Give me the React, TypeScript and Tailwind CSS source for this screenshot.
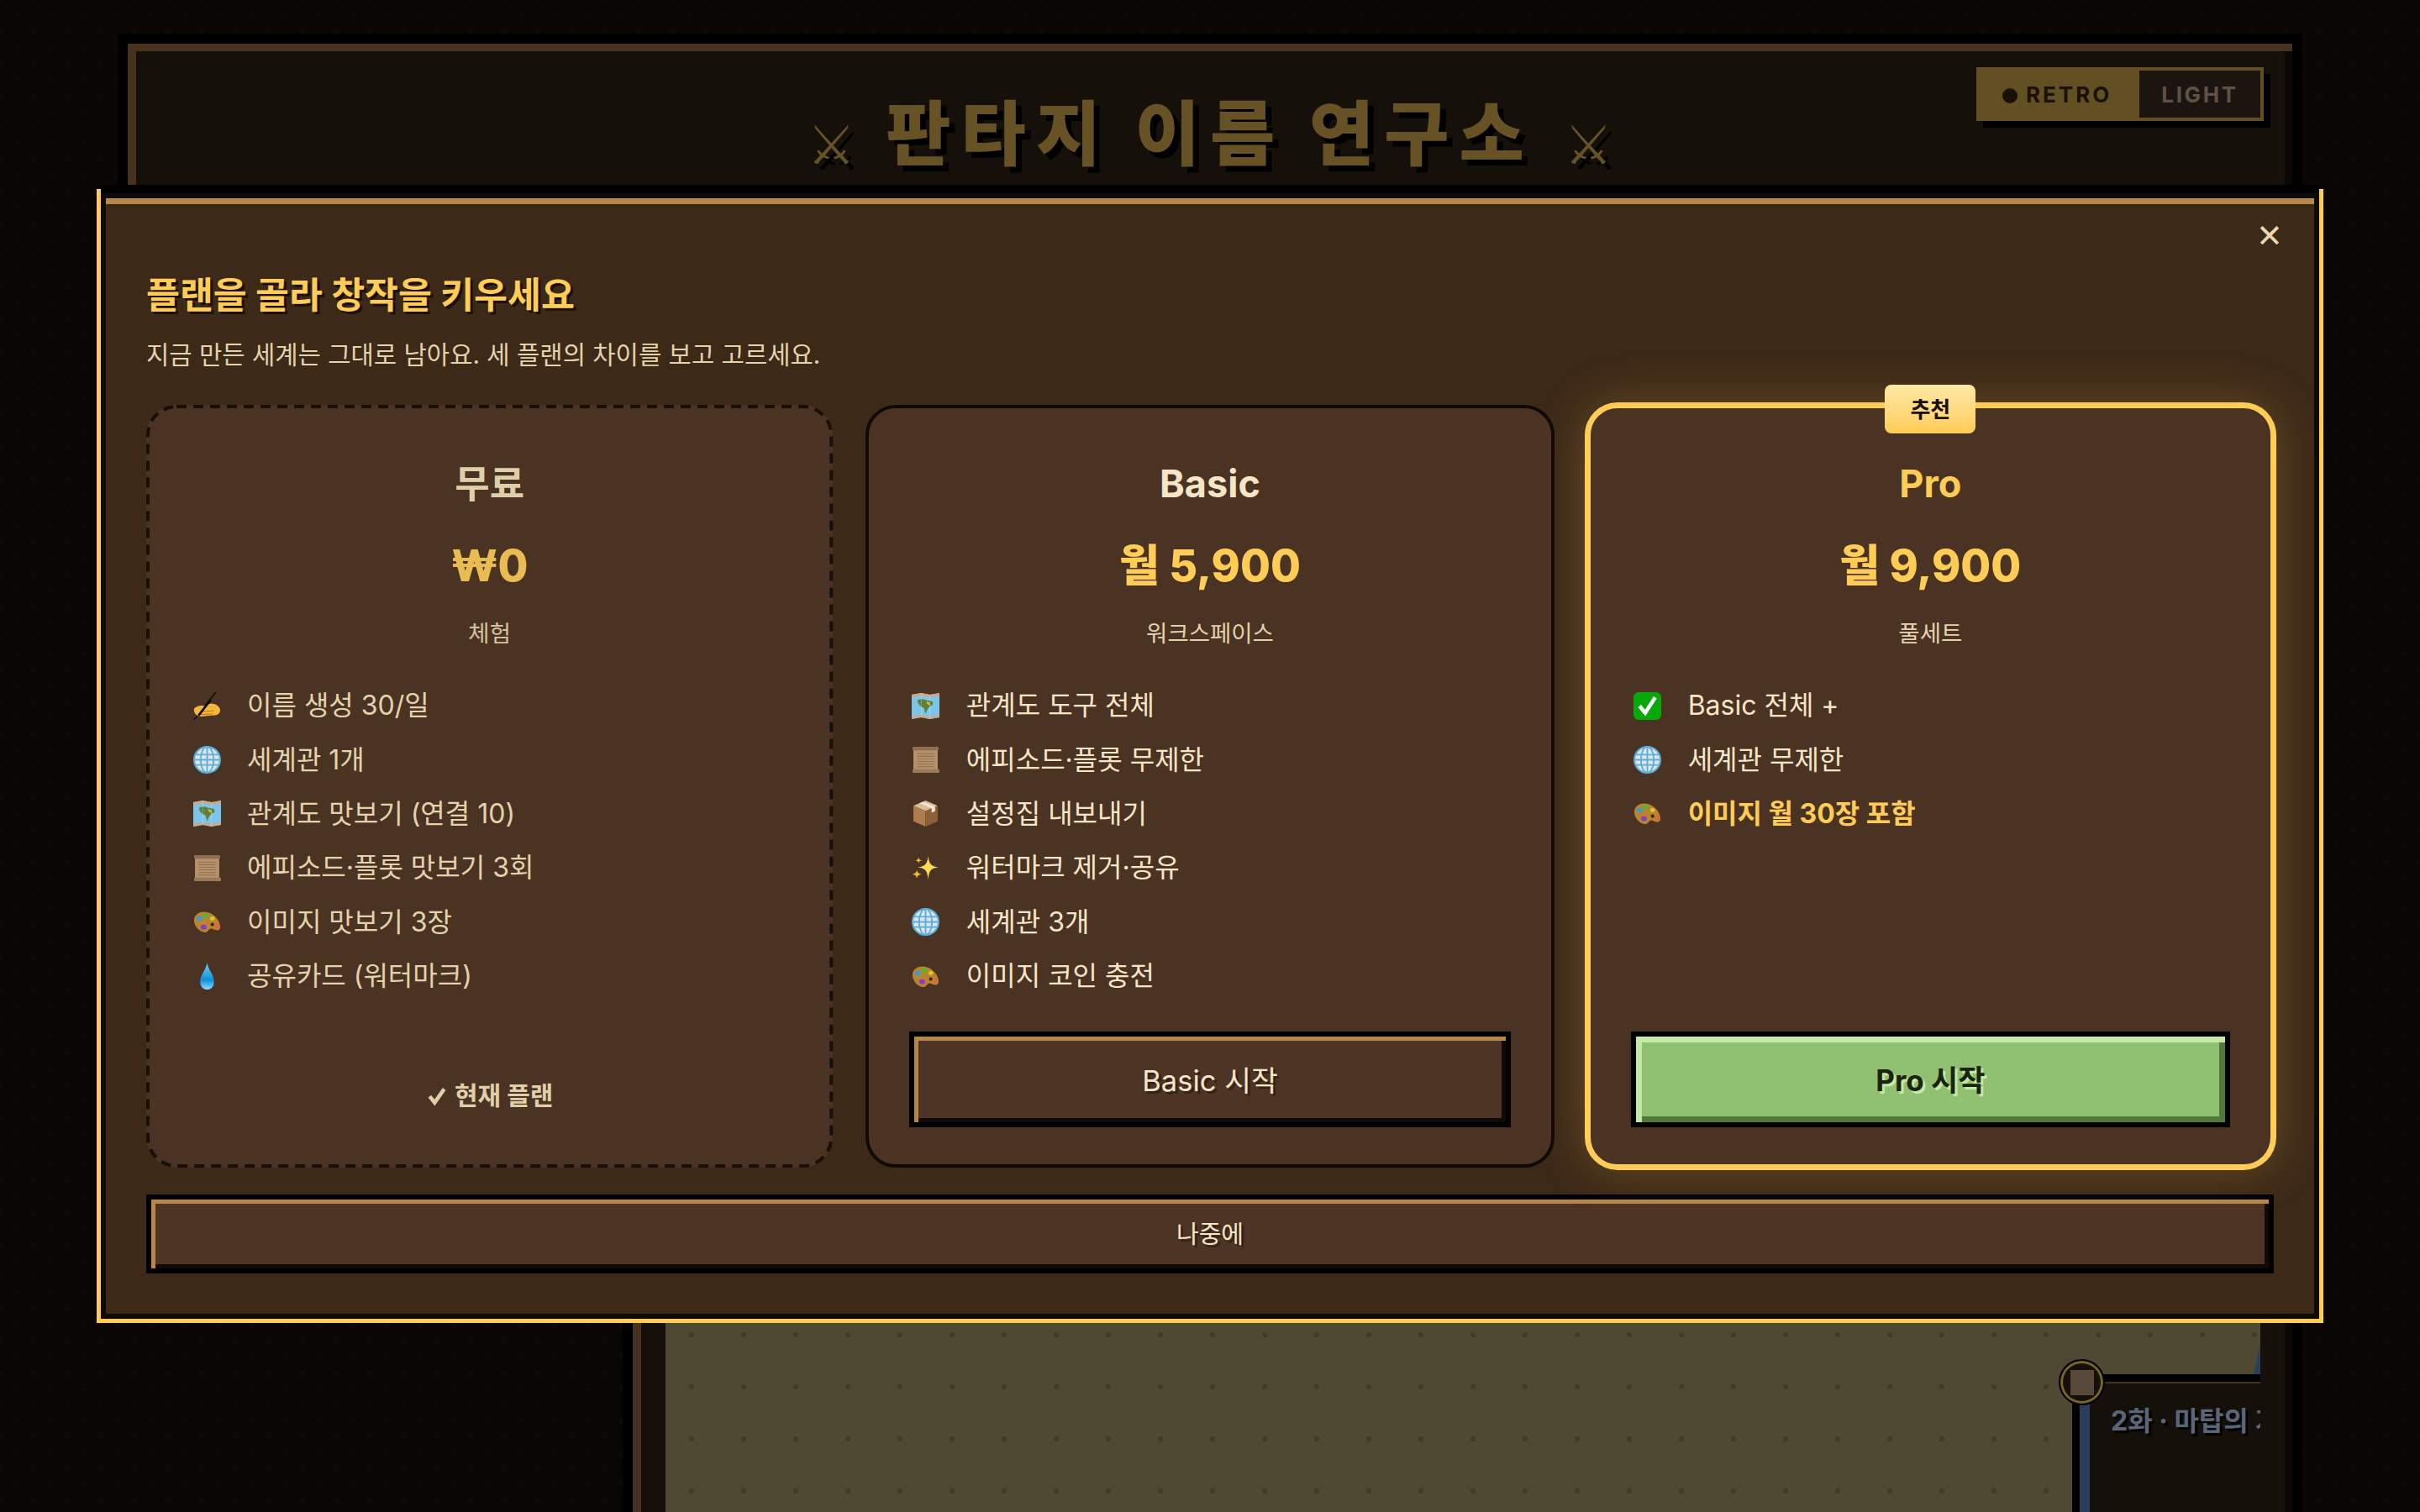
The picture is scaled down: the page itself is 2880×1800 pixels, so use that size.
import React from "react";

// emoji drawn by hand, the sandbox has no colour emoji font
const HandIcon = () => (
  <svg viewBox="0 0 32 32" className="h-[33px] w-[33px]">
    <path d="M1 32 L26 0" stroke="#0a0a0a" strokeWidth="1.4" fill="none" />
    <path d="M1 19 C4 16 9 15 12 16 L20 13 C26 13 31 17 31 21 C31 25 27 27 21 27 L9 28 C4 28 0 24 1 19 Z" fill="#f6b73c" />
    <path d="M8 23 C13 21 18 23 24 21 M7 26 C12 25 17 26 23 25" stroke="#b9761c" strokeWidth="1" fill="none" />
    <path d="M6 27 L20 9" stroke="#0a0a0a" strokeWidth="2.6" />
  </svg>
);

const GlobeIcon = () => (
  <svg viewBox="0 0 32 32" className="h-[33px] w-[33px]">
    <circle cx="16" cy="16" r="15" fill="#dfe5e8" stroke="#5aaedc" strokeWidth="2" />
    <ellipse cx="16" cy="16" rx="7.5" ry="15" fill="none" stroke="#5aaedc" strokeWidth="1.8" />
    <path d="M16 1 V31 M2 10 H30 M1 16 H31 M2 22 H30" stroke="#5aaedc" strokeWidth="1.8" />
  </svg>
);

const MapIcon = () => (
  <svg viewBox="0 0 32 32" className="h-[33px] w-[33px]">
    <path d="M0 3 L11 1 L21 3 L32 1 V29 L21 31 L11 29 L0 31 Z" fill="#7cc4ea" />
    <path d="M0 3 L11 1 L21 3 L32 1 V4 L21 6 L11 4 L0 6 Z M0 28 L11 26 L21 28 L32 26 V29 L21 31 L11 29 L0 31 Z" fill="#c9a98a" />
    <path d="M7 9 C11 7 15 8 18 10 C23 9 26 12 24 15 C21 15 20 18 18 20 L16 25 L14 18 C10 17 6 13 7 9 Z" fill="#5f7f3a" />
    <path d="M17 11 C20 11 22 13 21 15 C19 15 17 14 17 11 Z" fill="#d8b23a" />
    <path d="M11 1 V29 M21 3 V31" stroke="#ffffff" strokeOpacity="0.25" />
  </svg>
);

const ScrollIcon = () => (
  <svg viewBox="0 0 32 32" className="h-[33px] w-[33px]">
    <rect x="2" y="3" width="28" height="26" fill="#b5926c" />
    <path d="M6 9 H26 M6 12 H26 M6 15 H26 M6 18 H26 M6 21 H26 M6 24 H26" stroke="#93724f" strokeWidth="1" />
    <rect x="1" y="1" width="30" height="4" rx="1" fill="#8f6f4e" />
    <rect x="1" y="27" width="31" height="4" rx="1" fill="#9a7a58" />
  </svg>
);

const PaletteIcon = () => (
  <svg viewBox="0 0 32 32" className="h-[33px] w-[33px]">
    <path d="M1 13 C2 6 10 3 17 5 C25 7 32 16 31 23 C30 27 26 26 22 24 C18 23 18 27 15 28 C8 29 0 21 1 13 Z" fill="#b8842f" />
    <ellipse cx="7" cy="12" rx="3" ry="2.6" fill="#2d9fe0" />
    <ellipse cx="14" cy="9" rx="3" ry="2.4" fill="#3fc02a" />
    <ellipse cx="22" cy="12" rx="2.6" ry="2.2" fill="#e2c72a" />
    <ellipse cx="12" cy="22" rx="3.4" ry="2.8" fill="#8a3ec8" />
    <ellipse cx="28" cy="21" rx="2.4" ry="2.6" fill="#e8604a" />
    <circle cx="22" cy="19" r="2" fill="#3a2412" />
  </svg>
);

const DropIcon = () => (
  <svg viewBox="0 0 32 32" className="h-[33px] w-[33px]">
    <defs>
      <linearGradient id="dropFill" x1="0" y1="0" x2="0" y2="1">
        <stop offset="0" stopColor="#6fd0f8" />
        <stop offset="0.65" stopColor="#0f8fe2" />
        <stop offset="1" stopColor="#8fdcff" />
      </linearGradient>
    </defs>
    <path d="M16 0 C17 8 24 14 24 22 C24 28 20 31 16 31 C12 31 8 28 8 22 C8 14 15 8 16 0 Z" fill="url(#dropFill)" />
  </svg>
);

const BoxIcon = () => (
  <svg viewBox="0 0 32 32" className="h-[33px] w-[33px]">
    <path d="M16 1 L30 7 L16 13 L2 7 Z" fill="#dcbb93" />
    <path d="M2 7 L16 13 V31 L2 25 Z" fill="#b07c4e" />
    <path d="M30 7 L16 13 V31 L30 25 Z" fill="#8f6038" />
    <path d="M9 4 L23 10 V15 L27 13 V8 L13 2.5 Z" fill="#ece6da" />
  </svg>
);

const SparkleIcon = () => (
  <svg viewBox="0 0 32 32" className="h-[33px] w-[33px]">
    <path d="M19 2 C20 11 22 14 31 15 C22 16 20 19 19 29 C18 19 16 16 7 15 C16 14 18 11 19 2 Z" fill="#ffdc55" />
    <path d="M6 18 C6.5 21 7.5 22 11 23 C7.5 24 6.5 25 6 28 C5.5 25 4.5 24 1 23 C4.5 22 5.5 21 6 18 Z" fill="#f5b92c" />
    <path d="M8 3 C8.4 6 9 6.6 12 7 C9 7.4 8.4 8 8 11 C7.6 8 7 7.4 4 7 C7 6.6 7.6 6 8 3 Z" fill="#f5b92c" />
  </svg>
);

const CheckIcon = () => (
  <svg viewBox="0 0 32 32" className="h-[33px] w-[33px]">
    <rect x="0" y="0" width="32" height="32" rx="6" fill="#07a807" />
    <path d="M7 16 L13.5 24 L25 6" stroke="#ffffff" strokeWidth="4.4" fill="none" />
  </svg>
);

const freeRows = [
  { icon: <HandIcon />, label: "이름 생성 30/일" },
  { icon: <GlobeIcon />, label: "세계관 1개" },
  { icon: <MapIcon />, label: "관계도 맛보기 (연결 10)" },
  { icon: <ScrollIcon />, label: "에피소드·플롯 맛보기 3회" },
  { icon: <PaletteIcon />, label: "이미지 맛보기 3장" },
  { icon: <DropIcon />, label: "공유카드 (워터마크)" },
];

const basicRows = [
  { icon: <MapIcon />, label: "관계도 도구 전체" },
  { icon: <ScrollIcon />, label: "에피소드·플롯 무제한" },
  { icon: <BoxIcon />, label: "설정집 내보내기" },
  { icon: <SparkleIcon />, label: "워터마크 제거·공유" },
  { icon: <GlobeIcon />, label: "세계관 3개" },
  { icon: <PaletteIcon />, label: "이미지 코인 충전" },
];

const proRows = [
  { icon: <CheckIcon />, label: "Basic 전체 +" },
  { icon: <GlobeIcon />, label: "세계관 무제한" },
  { icon: <PaletteIcon />, label: "이미지 월 30장 포함", strong: true },
];

type Row = { icon: React.ReactNode; label: string; strong?: boolean };

const FeatureList = ({ rows, dim }: { rows: Row[]; dim?: boolean }) => (
  <ul className="mt-[34px] flex flex-col">
    {rows.map((row) => (
      <li key={row.label} className="flex h-[64.4px] items-center gap-[28px] text-[32px]">
        <span className="flex w-[40px] justify-center">{row.icon}</span>
        <span className={row.strong ? "font-bold text-[#ffcc55]" : dim ? "text-[#e3d3ad]" : "text-[#f5e6c8]"}>{row.label}</span>
      </li>
    ))}
  </ul>
);

const App: React.FC = () => {
  return (
    <div className="relative h-[1800px] w-[2880px] overflow-hidden bg-[#090604] bg-[radial-gradient(circle,#0c0906_3px,transparent_3.5px),radial-gradient(circle,#0c0906_3px,transparent_3.5px)] bg-[length:40px_38px] bg-[position:0_0,20px_19px] font-['Inter','Noto_Sans_CJK_KR',sans-serif]">
      {/* page behind the dialog, dimmed colours taken straight from the picture */}
      <header className="mx-[140px] mt-[40px] grid h-[240px] grid-cols-[1fr_auto_1fr] border-[12px] border-black bg-[#16100a] shadow-[inset_10px_9px_0_#47321f,inset_-9px_0_0_#0a0705]">
        <div />
        <div className="mt-[58px] flex h-[100px] items-center gap-[36px] text-[#665224]">
          <span className="mt-[26px] font-['DejaVu_Sans',sans-serif] text-[64px] leading-none [text-shadow:7px_7px_0_#000]">⚔</span>
          <h1 className="text-[84px] leading-none font-black tracking-[12px] [text-shadow:7px_7px_0_#000]">판타지 이름 연구소</h1>
          <span className="mt-[26px] font-['DejaVu_Sans',sans-serif] text-[64px] leading-none [text-shadow:7px_7px_0_#000]">⚔</span>
        </div>
        <div className="mt-[28px] mr-[34px] flex justify-end">
          <div className="flex h-[64px] w-[342px] border-[4px] border-[#635022] bg-[#635022] shadow-[8px_8px_0_#000]">
            <div className="flex w-[190px] items-center gap-[10px] pl-[27px] text-[26px] font-bold tracking-[3px] text-[#1a1006]">
              <span className="mt-[4px] h-[18px] w-[18px] rounded-full bg-[#1a1006]" />
              RETRO
            </div>
            <div className="flex flex-1 items-center justify-center bg-[#1c140e] text-[26px] font-bold tracking-[2.6px] text-[#5c5344]">LIGHT</div>
          </div>
        </div>
      </header>

      <main className="mt-[20px] mr-[140px] ml-[741px] flex h-[1560px] border-[12px] border-black bg-[#16100a] pt-[6px] pl-[39px] shadow-[inset_10px_0_0_#47321f,inset_-9px_0_0_#0a0705]">
        <div className="relative mr-[38px] flex-1 overflow-hidden bg-[#4f4933] bg-[radial-gradient(circle,#423c2a_3px,transparent_3.5px)] bg-[length:62px_62px]">
          <svg className="absolute top-[1282px] right-0 h-[36px] w-[8px]" viewBox="0 0 8 36">
            <polygon points="8,0 8,36 0,36" fill="#2a3f5a" />
          </svg>
          <div className="absolute top-[1318px] left-[1674px] h-[300px] w-[400px] border-t-[9px] border-l-[9px] border-black bg-[#16100a]">
            <div className="h-[2px] bg-[#47321f]" />
            <div className="absolute top-0 bottom-0 left-0 w-[12px] bg-[#2a3f5a]" />
            <p className="mt-[25px] ml-[37px] text-[32px] leading-[40px] font-bold whitespace-nowrap text-[#5a6678] [text-shadow:3px_3px_0_#000]">2화 · 마탑의 기억</p>
          </div>
          <div className="absolute top-[1300px] left-[1658px] flex h-[55px] w-[55px] items-center justify-center rounded-full border-[2px] border-black bg-[#16100a] shadow-[inset_0_0_0_3px_#7a6428]">
            <div className="h-[30px] w-[28px] bg-[#5f5040] opacity-90" />
          </div>
        </div>
      </main>

      {/* overlay */}
      <div className="absolute inset-0 flex justify-center">
        <section className="relative mt-[230px] flex h-[1340px] w-[2640px] flex-col border-[6px] border-[#0f0a05] bg-[#3c2918] px-[48px] pt-[85px] pb-[48px] shadow-[0_-10px_0_#000,0_0_0_5px_#ffcc55]">
          <div className="absolute top-0 right-0 left-0 h-[7px] bg-[#b5874b]" />
          <button className="absolute top-[30px] right-[38px] flex h-[30px] w-[30px] items-center justify-center font-['DejaVu_Sans',sans-serif] text-[38px] font-bold text-[#e8d8b0]">✕</button>

          <h2 className="h-[60px] text-[43.4px] leading-[60px] font-bold text-[#ffcc55] [text-shadow:3px_3px_0_#1a0f05]">플랜을 골라 창작을 키우세요</h2>
          <p className="mt-[21px] h-[40px] text-[29.7px] leading-[40px] text-[#e3d3ad]">지금 만든 세계는 그대로 남아요. 세 플랜의 차이를 보고 고르세요.</p>

          <div className="mt-[40px] grid h-[908px] grid-cols-3 gap-[40px]">
            {/* free */}
            <div className="relative flex flex-col rounded-[36px] border-[4px] border-transparent bg-[#4b3323] px-[48px] pt-[62px] pb-[44px]">
              <svg className="absolute top-[-4px] left-[-4px] h-[908px] w-[818px]">
                <rect x="2" y="2" width="813.3" height="904" rx="34" fill="none" stroke="#16100a" strokeWidth="4" strokeDasharray="12 8" />
              </svg>
              <h3 className="h-[56px] pt-[1px] text-center text-[45px] leading-[56px] font-bold text-[#dfcfa8]">무료</h3>
              <div className="mt-[34px] h-[72px] text-center text-[52px] leading-[72px] font-extrabold text-[#e8bc50]">₩0</div>
              <div className="mt-[24px] h-[40px] text-center text-[27.5px] leading-[40px] text-[#d3c39e]">체험</div>
              <FeatureList rows={freeRows} dim />
              <div className="mt-auto flex h-[76px] items-center justify-center gap-[8px] text-[30px] font-bold text-[#dfcfa8]">
                <svg viewBox="0 0 24 24" className="h-[26px] w-[26px]">
                  <path d="M4 13 L9.5 20 L20 5" stroke="#dfcfa8" strokeWidth="4.2" fill="none" />
                </svg>
                현재 플랜
              </div>
            </div>

            {/* basic */}
            <div className="mx-[-1.5px] flex flex-col rounded-[36px] border-[4px] border-[#0f0a05] bg-[#4b3323] px-[48px] pt-[62px] pb-[44px]">
              <h3 className="h-[56px] text-center text-[45px] leading-[56px] font-bold text-[#f5e6c8]">Basic</h3>
              <div className="mt-[34px] h-[72px] text-center text-[52px] leading-[72px] font-extrabold text-[#ffcc55]">월 5,900</div>
              <div className="mt-[24px] h-[40px] text-center text-[27.5px] leading-[40px] text-[#e3d3ad]">워크스페이스</div>
              <FeatureList rows={basicRows} />
              <button className="mt-auto h-[114px] border-[6px] border-black bg-[#4d3424] pt-[3px] text-[34.5px] text-[#f5e6c8] shadow-[inset_5px_5px_0_#b5874b,inset_-5px_-5px_0_#0f0a05] [text-shadow:3px_3px_0_rgba(0,0,0,0.35)]">Basic 시작</button>
            </div>

            {/* pro */}
            <div className="relative flex flex-col rounded-[36px] border-[4px] border-[#ffcc55] bg-[#4b3323] px-[48px] pt-[62px] pb-[44px] shadow-[0_0_0_3px_#ffcc55,0_0_60px_rgba(255,204,85,0.25)]">
              <span className="absolute top-[-28px] left-1/2 flex h-[58px] w-[108px] -translate-x-1/2 items-center justify-center rounded-[8px] bg-gradient-to-b from-[#ffe9a5] to-[#ffcc55] text-[26px] font-bold text-[#1a0f05]">추천</span>
              <h3 className="h-[56px] text-center text-[45px] leading-[56px] font-bold text-[#ffcc55]">Pro</h3>
              <div className="mt-[34px] h-[72px] text-center text-[52px] leading-[72px] font-extrabold text-[#ffcc55]">월 9,900</div>
              <div className="mt-[24px] h-[40px] text-center text-[27.5px] leading-[40px] text-[#e3d3ad]">풀세트</div>
              <FeatureList rows={proRows} />
              <button className="mt-auto h-[114px] border-[6px] border-black bg-[#90c173] pt-[3px] text-[35px] font-bold text-[#1c2410] shadow-[inset_7px_7px_0_#c5e8a5,inset_-7px_-7px_0_#4f7a39] [text-shadow:3px_3px_0_#c5e8a5]">Pro 시작</button>
            </div>
          </div>

          <button className="mt-[32px] h-[94px] border-[6px] border-black bg-[#4d3424] pt-[2px] text-[29px] text-[#f5e6c8] shadow-[inset_5px_5px_0_#b5874b,inset_-5px_-5px_0_#0f0a05] [text-shadow:3px_3px_0_rgba(0,0,0,0.35)]">나중에</button>
        </section>
      </div>
    </div>
  );
};

export default App;
